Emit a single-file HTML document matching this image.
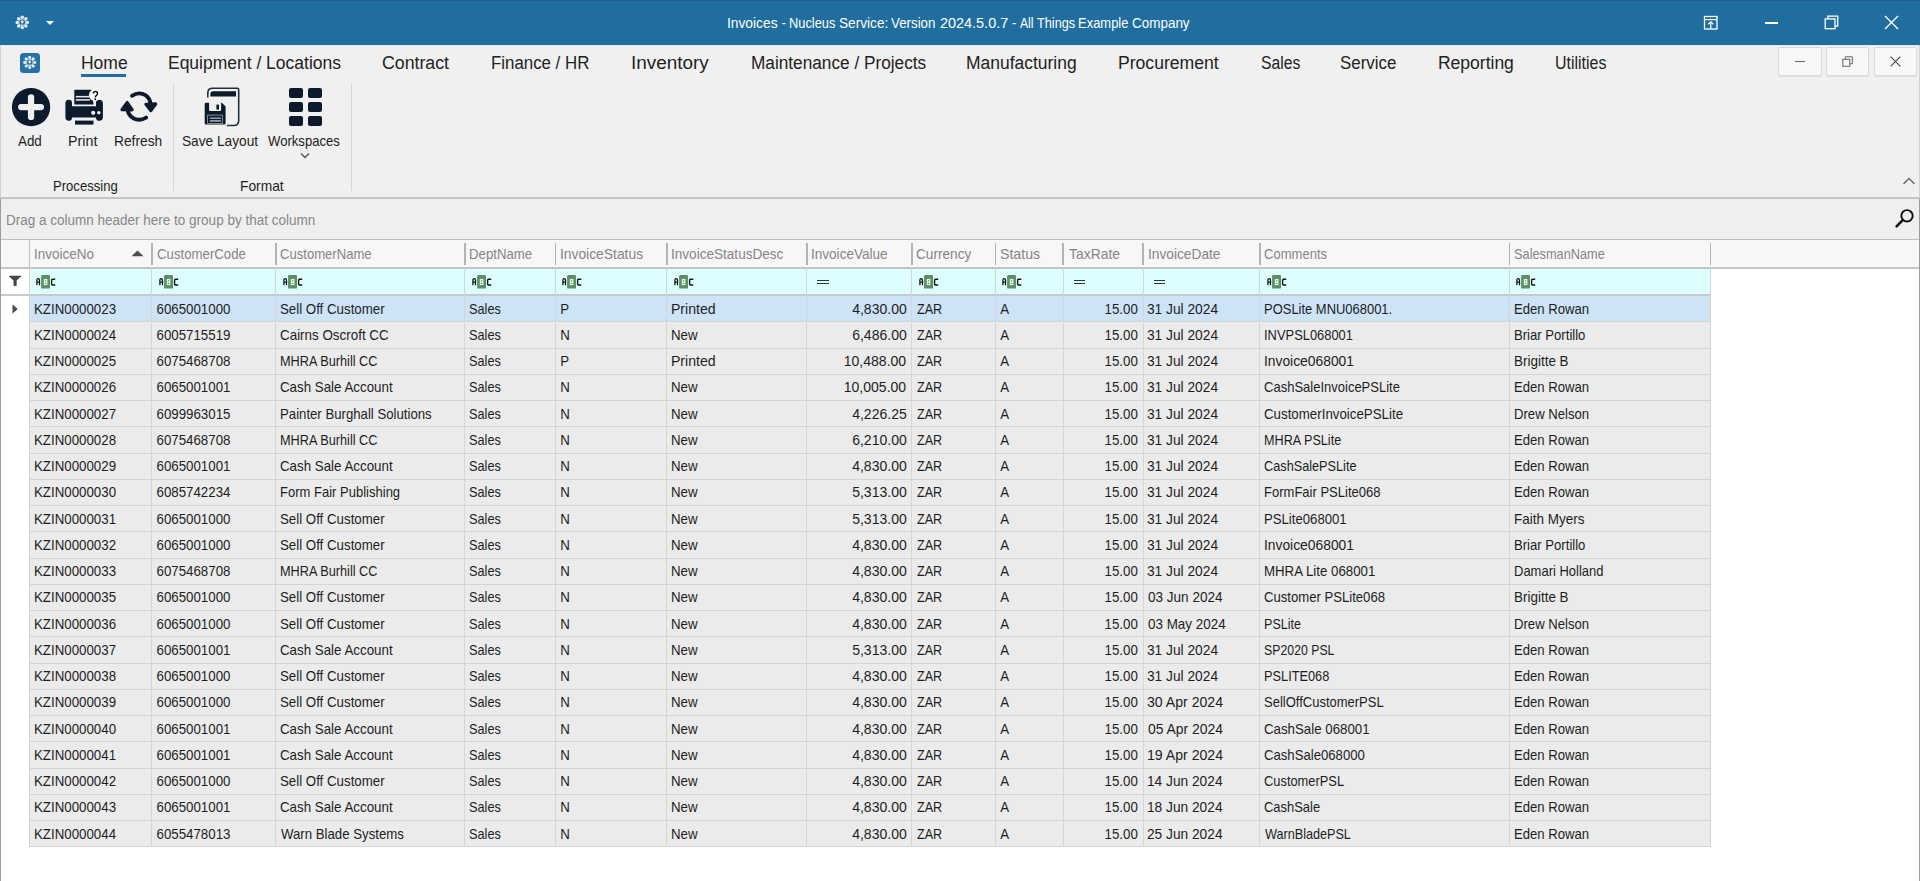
<!DOCTYPE html><html><head><meta charset="utf-8"><style>
html,body{margin:0;padding:0}
body{width:1920px;height:881px;position:relative;overflow:hidden;background:#fff;font-family:"Liberation Sans",sans-serif;}
.a{position:absolute;white-space:pre;line-height:normal}
.g{font-size:13.3px;color:#1e1e1e;transform:scaleY(1.11);transform-origin:0 2.9px}
.s11{transform:scaleY(1.11);transform-origin:0 2.9px}
.b{position:absolute}
svg{position:absolute;overflow:visible}
</style></head><body>

<div class="b" style="left:0;top:0;width:1920px;height:45px;background:#206e9f"></div>
<div class="b" style="left:0;top:0;width:1920px;height:1px;background:#1d5f88"></div>
<svg style="left:12px;top:12px" width="20" height="20" viewBox="-10.25 -10.40 20 20"><g opacity="0.88"><circle cx="5.10" cy="0.00" r="1.75" fill="#ffffff"/><circle cx="3.61" cy="3.61" r="1.75" fill="#ffffff"/><circle cx="0.00" cy="5.10" r="1.75" fill="#ffffff"/><circle cx="-3.61" cy="3.61" r="1.75" fill="#ffffff"/><circle cx="-5.10" cy="0.00" r="1.75" fill="#ffffff"/><circle cx="-3.61" cy="-3.61" r="1.75" fill="#ffffff"/><circle cx="-0.00" cy="-5.10" r="1.75" fill="#ffffff"/><circle cx="3.61" cy="-3.61" r="1.75" fill="#ffffff"/><circle cx="0" cy="0" r="3.47" fill="none" stroke="#ffffff" stroke-width="1.0" opacity="0.75"/><ellipse cx="0" cy="-0.6" rx="1.33" ry="1.63" fill="#ffffff"/><path d="M-2.29 3.16 Q0 0.76 2.29 3.16" fill="none" stroke="#ffffff" stroke-width="0.9" opacity="0.6"/></g></svg>
<svg style="left:45px;top:20px" width="10" height="6" viewBox="0 0 10 6"><path d="M1 1 L9 1 L5 5 Z" fill="#fff"/></svg>
<div class="a" style="left:726.50px;top:14.5px;font-size:13.4px;color:#fff;transform:scale(1.029,1.14);transform-origin:1px 2.9px">Invoices</div>
<div class="a" style="left:781.50px;top:14.5px;font-size:13.4px;color:#fff;transform:scale(1.000,1.14);transform-origin:1px 2.9px">-</div>
<div class="a" style="left:789.00px;top:14.5px;font-size:13.4px;color:#fff;transform:scale(0.957,1.14);transform-origin:1px 2.9px">Nucleus</div>
<div class="a" style="left:839.00px;top:14.5px;font-size:13.4px;color:#fff;transform:scale(1.020,1.14);transform-origin:1px 2.9px">Service:</div>
<div class="a" style="left:891.25px;top:14.5px;font-size:13.4px;color:#fff;transform:scale(0.994,1.14);transform-origin:0px 2.9px">Version</div>
<div class="a" style="left:939.50px;top:14.5px;font-size:13.4px;color:#fff;transform:scale(1.079,1.14);transform-origin:1px 2.9px">2024.5.0.7</div>
<div class="a" style="left:1012.00px;top:14.5px;font-size:13.4px;color:#fff;transform:scale(1.000,1.14);transform-origin:1px 2.9px">-</div>
<div class="a" style="left:1020.00px;top:14.5px;font-size:13.4px;color:#fff;transform:scale(0.907,1.14);transform-origin:0px 2.9px">All</div>
<div class="a" style="left:1036.90px;top:14.5px;font-size:13.4px;color:#fff;transform:scale(0.950,1.14);transform-origin:0px 2.9px">Things</div>
<div class="a" style="left:1078.00px;top:14.5px;font-size:13.4px;color:#fff;transform:scale(0.967,1.14);transform-origin:1px 2.9px">Example</div>
<div class="a" style="left:1131.50px;top:14.5px;font-size:13.4px;color:#fff;transform:scale(1.005,1.14);transform-origin:1px 2.9px">Company</div>
<svg style="left:1703px;top:15px" width="16" height="15" viewBox="0 0 16 15"><rect x="1.5" y="1.5" width="12.5" height="12.5" fill="none" stroke="#fff" stroke-width="1.3"/><line x1="1.5" y1="4.6" x2="14" y2="4.6" stroke="#fff" stroke-width="1.2"/><line x1="7.75" y1="7" x2="7.75" y2="14" stroke="#fff" stroke-width="1.2"/><path d="M5.2 9.3 L7.75 6.8 L10.3 9.3" fill="none" stroke="#fff" stroke-width="1.2"/></svg>
<div class="b" style="left:1765px;top:22px;width:13px;height:1.5px;background:#fff"></div>
<svg style="left:1824px;top:15px" width="15" height="15" viewBox="0 0 15 15"><rect x="1.2" y="3.9" width="9.8" height="9.8" fill="none" stroke="#fff" stroke-width="1.3"/><path d="M3.9 3.9 V1.2 H13.7 V11 H11" fill="none" stroke="#fff" stroke-width="1.3"/></svg>
<svg style="left:1884px;top:15px" width="15" height="15" viewBox="0 0 15 15"><path d="M1 1 L14 14 M14 1 L1 14" stroke="#fff" stroke-width="1.4"/></svg>
<div class="b" style="left:0;top:45px;width:1920px;height:152px;background:#f0f0f0"></div>
<div class="b" style="left:0;top:45px;width:1920px;height:1px;background:#e7e9eb"></div>
<div class="b" style="left:0;top:45px;width:1px;height:152px;background:#d4d4d4"></div>
<div class="b" style="left:0;top:197px;width:1px;height:684px;background:#9c9c9c"></div>
<div class="b" style="left:1919px;top:45px;width:1px;height:152px;background:#d4d4d4"></div>
<div class="b" style="left:1919px;top:197px;width:1px;height:684px;background:#9c9c9c"></div>
<div class="b" style="left:20.2px;top:52.6px;width:19.8px;height:20px;border-radius:3.5px;background:#2472a8"></div>
<svg style="left:19px;top:52px" width="20" height="20" viewBox="-10.70 -10.40 20 20"><g opacity="0.88"><circle cx="5.00" cy="0.00" r="1.55" fill="#ffffff"/><circle cx="3.54" cy="3.54" r="1.55" fill="#ffffff"/><circle cx="0.00" cy="5.00" r="1.55" fill="#ffffff"/><circle cx="-3.54" cy="3.54" r="1.55" fill="#ffffff"/><circle cx="-5.00" cy="0.00" r="1.55" fill="#ffffff"/><circle cx="-3.54" cy="-3.54" r="1.55" fill="#ffffff"/><circle cx="-0.00" cy="-5.00" r="1.55" fill="#ffffff"/><circle cx="3.54" cy="-3.54" r="1.55" fill="#ffffff"/><circle cx="0" cy="0" r="3.40" fill="none" stroke="#ffffff" stroke-width="1.0" opacity="0.75"/><ellipse cx="0" cy="-0.6" rx="1.30" ry="1.60" fill="#ffffff"/><path d="M-2.25 3.10 Q0 0.75 2.25 3.10" fill="none" stroke="#ffffff" stroke-width="0.9" opacity="0.6"/></g></svg>
<div class="a" style="left:80.5px;top:51.8px;font-size:17.2px;color:#222;transform:scale(1.017,1.07);transform-origin:1px 3.7px">Home</div>
<div class="a" style="left:168.4px;top:51.8px;font-size:17.2px;color:#222;transform:scale(1.017,1.07);transform-origin:1px 3.7px">Equipment / Locations</div>
<div class="a" style="left:381.5px;top:51.8px;font-size:17.2px;color:#222;transform:scale(1.032,1.07);transform-origin:1px 3.7px">Contract</div>
<div class="a" style="left:491.3px;top:51.8px;font-size:17.2px;color:#222;transform:scale(0.98,1.07);transform-origin:1px 3.7px">Finance / HR</div>
<div class="a" style="left:631.3px;top:51.8px;font-size:17.2px;color:#222;transform:scale(1.101,1.07);transform-origin:1px 3.7px">Inventory</div>
<div class="a" style="left:750.7px;top:51.8px;font-size:17.2px;color:#222;transform:scale(1.002,1.07);transform-origin:1px 3.7px">Maintenance / Projects</div>
<div class="a" style="left:966.3px;top:51.8px;font-size:17.2px;color:#222;transform:scale(1.016,1.07);transform-origin:1px 3.7px">Manufacturing</div>
<div class="a" style="left:1118px;top:51.8px;font-size:17.2px;color:#222;transform:scale(1.024,1.07);transform-origin:1px 3.7px">Procurement</div>
<div class="a" style="left:1260.7px;top:51.8px;font-size:17.2px;color:#222;transform:scale(0.91,1.07);transform-origin:1px 3.7px">Sales</div>
<div class="a" style="left:1340px;top:51.8px;font-size:17.2px;color:#222;transform:scale(0.982,1.07);transform-origin:1px 3.7px">Service</div>
<div class="a" style="left:1438px;top:51.8px;font-size:17.2px;color:#222;transform:scale(1.018,1.07);transform-origin:1px 3.7px">Reporting</div>
<div class="a" style="left:1555px;top:51.8px;font-size:17.2px;color:#222;transform:scale(0.926,1.07);transform-origin:1px 3.7px">Utilities</div>
<div class="b" style="left:81px;top:73.8px;width:45.3px;height:3.7px;background:#1f6fa3"></div>
<div class="b" style="left:1778.4px;top:47.4px;width:43.4px;height:28.4px;box-sizing:border-box;border:1px solid #dadada;border-radius:2px;background:#f8f8f8;box-shadow:0 0.5px 1px rgba(0,0,0,0.08)"></div>
<div class="b" style="left:1825.6px;top:47.4px;width:43.4px;height:28.4px;box-sizing:border-box;border:1px solid #dadada;border-radius:2px;background:#f8f8f8;box-shadow:0 0.5px 1px rgba(0,0,0,0.08)"></div>
<div class="b" style="left:1873.5px;top:47.4px;width:43.4px;height:28.4px;box-sizing:border-box;border:1px solid #dadada;border-radius:2px;background:#f8f8f8;box-shadow:0 0.5px 1px rgba(0,0,0,0.08)"></div>
<div class="b" style="left:1795px;top:61.2px;width:10.2px;height:1.3px;background:#666"></div>
<svg style="left:1842px;top:55.5px" width="12" height="12" viewBox="0 0 12 12"><rect x="0.8" y="3.3" width="7" height="7" fill="none" stroke="#666" stroke-width="1"/><path d="M3.3 3.3 V0.8 H10.3 V7.8 H7.8" fill="none" stroke="#666" stroke-width="1"/></svg>
<svg style="left:1889.5px;top:55.5px" width="11" height="11" viewBox="0 0 11 11"><path d="M0.6 0.6 L10.4 10.4 M10.4 0.6 L0.6 10.4" stroke="#4a4a4a" stroke-width="1.1"/></svg>
<svg style="left:11px;top:87px" width="40" height="40" viewBox="0 0 40 40"><circle cx="20.05" cy="20.1" r="19.15" fill="#0c1a2b"/><path d="M20.05 10.3 V29.9 M10.2 20.1 H29.9" stroke="#f0f0f0" stroke-width="6.3" stroke-linecap="round"/></svg>
<svg style="left:60px;top:85px" width="50" height="45" viewBox="0 0 50 45">
<path d="M14.3 4.85 H31.5 L33.5 19.4 H14.3 Z" fill="#0c1a2b"/>
<rect x="15.8" y="10.9" width="13.5" height="1.6" fill="#e2e4e6"/>
<rect x="15.8" y="14.1" width="14" height="1.6" fill="#e2e4e6"/>
<path d="M5.4 18.3 Q5.4 14.8 8.7 14.8 Q12 14.8 12 18 V21.2 H36 V18 Q36 14.8 39.4 14.8 Q42.9 14.8 42.9 18.3 V32.3 Q42.9 35.75 39.4 35.75 Q36 35.75 36 32.4 H12 Q12 35.75 8.7 35.75 Q5.4 35.75 5.4 32.3 Z" fill="#0c1a2b"/>
<circle cx="33.2" cy="27.8" r="2.1" fill="#f0f0f0"/><circle cx="38.8" cy="27.8" r="1.7" fill="#f0f0f0"/>
<rect x="15" y="35.6" width="18.5" height="4" fill="#0c1a2b"/>
<circle cx="34.7" cy="10.2" r="5.8" fill="#fff"/>
<path d="M33.3 8.6 Q33.3 6.6 35.4 6.6 Q37.5 6.6 37.5 8.6 Q37.5 9.9 36.2 10.6 Q35.4 11.1 35.4 12.6" fill="none" stroke="#111" stroke-width="1.5"/><circle cx="35.3" cy="14.3" r="0.95" fill="#111"/>
</svg>
<svg style="left:115px;top:85px" width="50" height="45" viewBox="0 0 50 45">
<path d="M16.9 10.8 Q24 6.2 30.5 10.2 Q35 13.2 35.7 19.5" fill="none" stroke="#0c1a2b" stroke-width="3.8" stroke-linecap="round"/>
<path d="M31.0 19.3 L40.6 19.0 L35.8 25.6 Z" fill="#0c1a2b" stroke="#0c1a2b" stroke-width="3.3" stroke-linejoin="round"/>
<path d="M31.2 32.6 Q24.5 36.5 18.2 33.2 Q13 30 12.5 24" fill="none" stroke="#0c1a2b" stroke-width="3.8" stroke-linecap="round"/>
<path d="M7.0 24.6 L17.0 24.8 L12.1 17.6 Z" fill="#0c1a2b" stroke="#0c1a2b" stroke-width="3.3" stroke-linejoin="round"/>
</svg>
<svg style="left:200px;top:84px" width="45" height="46" viewBox="0 0 45 46">
<path d="M7.8 13.4 V9 Q7.8 4.2 12.6 4.2 H37.4 Q38.7 4.2 38.7 5.5 V36.5 Q38.7 41.5 33.7 41.5 H26.8" fill="none" stroke="#23313f" stroke-width="1.6"/>
<path d="M10.4 10 Q10.4 7.3 13 7.3 H36 V12.5 H10.4 Z" fill="#0c1a2b"/>
<path d="M4.7 20 Q4.7 18.8 5.9 18.8 H9.1 V26 Q9.1 27.1 10.2 27.1 H20 Q21.1 27.1 21.1 26 V18.8 H21.8 L25.6 22.6 V39.2 Q25.6 40.4 24.4 40.4 H5.9 Q4.7 40.4 4.7 39.2 Z" fill="#0c1a2b"/>
<rect x="16.4" y="20.6" width="2.6" height="5" fill="#0c1a2b"/>
<rect x="7.6" y="31.1" width="15" height="8.4" fill="none" stroke="#8e98a2" stroke-width="0.9"/>
<rect x="9.9" y="33.4" width="11" height="1.6" fill="#8e98a2"/>
<rect x="9.9" y="36" width="11" height="1.8" fill="#8e98a2"/>
</svg>
<div class="b" style="left:288.7px;top:87.8px;width:14.70px;height:10.40px;background:#0c1a2b;border-radius:2px"></div>
<div class="b" style="left:288.7px;top:101.9px;width:14.70px;height:10.40px;background:#0c1a2b;border-radius:2px"></div>
<div class="b" style="left:288.7px;top:116.1px;width:14.70px;height:10.40px;background:#0c1a2b;border-radius:2px"></div>
<div class="b" style="left:307.5px;top:87.8px;width:14.70px;height:10.40px;background:#0c1a2b;border-radius:2px"></div>
<div class="b" style="left:307.5px;top:101.9px;width:14.70px;height:10.40px;background:#0c1a2b;border-radius:2px"></div>
<div class="b" style="left:307.5px;top:116.1px;width:14.70px;height:10.40px;background:#0c1a2b;border-radius:2px"></div>
<div class="a" style="left:18.40px;top:133px;font-size:13.3px;color:#1e1e1e;transform:scale(1.004,1.11);transform-origin:0px 2.9px">Add</div>
<div class="a" style="left:68.40px;top:133px;font-size:13.3px;color:#1e1e1e;transform:scale(1.077,1.11);transform-origin:1px 2.9px">Print</div>
<div class="a" style="left:113.80px;top:133px;font-size:13.3px;color:#1e1e1e;transform:scale(1.036,1.11);transform-origin:1px 2.9px">Refresh</div>
<div class="a" style="left:182.30px;top:133px;font-size:13.3px;color:#1e1e1e;transform:scale(1.030,1.11);transform-origin:1px 2.9px">Save Layout</div>
<div class="a" style="left:268.30px;top:133px;font-size:13.3px;color:#1e1e1e;transform:scale(0.986,1.11);transform-origin:0px 2.9px">Workspaces</div>
<div class="a" style="left:52.50px;top:177.7px;font-size:13.3px;color:#1e1e1e;transform:scale(0.983,1.11);transform-origin:1px 2.9px">Processing</div>
<div class="a" style="left:239.80px;top:177.7px;font-size:13.3px;color:#1e1e1e;transform:scale(1.037,1.11);transform-origin:1px 2.9px">Format</div>
<svg style="left:300px;top:152px" width="10" height="8" viewBox="0 0 10 8"><path d="M1 1.5 L5 5.5 L9 1.5" fill="none" stroke="#555" stroke-width="1.4"/></svg>
<div class="b" style="left:173px;top:83px;width:1px;height:108px;background:#d6d6d6"></div>
<div class="b" style="left:351px;top:83px;width:1.2px;height:108px;background:#d6d6d6"></div>
<svg style="left:1902px;top:176px" width="14" height="10" viewBox="0 0 14 10"><path d="M1.5 8 L7 2.5 L12.5 8" fill="none" stroke="#666" stroke-width="1.3"/></svg>
<div class="b" style="left:0;top:197px;width:1920px;height:2px;background:#c3c3c3"></div>
<div class="b" style="left:1px;top:199px;width:1918px;height:40px;background:#efefef"></div>
<div class="a s11" style="left:6px;top:212px;font-size:13.5px;color:#878787">Drag a column header here to group by that column</div>
<svg style="left:1894px;top:207px" width="22" height="22" viewBox="0 0 22 22"><circle cx="13" cy="8.8" r="5.7" fill="none" stroke="#111" stroke-width="1.9"/><path d="M8.9 12.9 L2.6 19.3" stroke="#111" stroke-width="2.6" stroke-linecap="round"/></svg>
<div class="b" style="left:1px;top:239px;width:1918px;height:29px;background:#f7f7f7"></div>
<div class="b" style="left:1px;top:239px;width:1918px;height:1.2px;background:#bdbdbd"></div>
<div class="b" style="left:1px;top:267px;width:1918px;height:1.5px;background:#c4c4c4"></div>
<div class="b" style="left:29px;top:240px;width:1px;height:27px;background:#bdbdbd"></div>
<div class="a" style="left:33.75px;top:245.5px;font-size:13.3px;color:#858585;transform:scale(1.017,1.11);transform-origin:1px 2.9px">InvoiceNo</div>
<div class="a" style="left:156.50px;top:245.5px;font-size:13.3px;color:#858585;transform:scale(0.994,1.11);transform-origin:1px 2.9px">CustomerCode</div>
<div class="a" style="left:279.80px;top:245.5px;font-size:13.3px;color:#858585;transform:scale(0.984,1.11);transform-origin:1px 2.9px">CustomerName</div>
<div class="a" style="left:468.70px;top:245.5px;font-size:13.3px;color:#858585;transform:scale(0.994,1.11);transform-origin:1px 2.9px">DeptName</div>
<div class="a" style="left:559.80px;top:245.5px;font-size:13.3px;color:#858585;transform:scale(1.041,1.11);transform-origin:1px 2.9px">InvoiceStatus</div>
<div class="a" style="left:671.00px;top:245.5px;font-size:13.3px;color:#858585;transform:scale(1.021,1.11);transform-origin:1px 2.9px">InvoiceStatusDesc</div>
<div class="a" style="left:811.00px;top:245.5px;font-size:13.3px;color:#858585;transform:scale(1.020,1.11);transform-origin:1px 2.9px">InvoiceValue</div>
<div class="a" style="left:916.00px;top:245.5px;font-size:13.3px;color:#858585;transform:scale(1.025,1.11);transform-origin:1px 2.9px">Currency</div>
<div class="a" style="left:999.80px;top:245.5px;font-size:13.3px;color:#858585;transform:scale(1.067,1.11);transform-origin:1px 2.9px">Status</div>
<div class="a" style="left:1068.75px;top:245.5px;font-size:13.3px;color:#858585;transform:scale(1.047,1.11);transform-origin:0px 2.9px">TaxRate</div>
<div class="a" style="left:1147.75px;top:245.5px;font-size:13.3px;color:#858585;transform:scale(1.033,1.11);transform-origin:1px 2.9px">InvoiceDate</div>
<div class="a" style="left:1263.50px;top:245.5px;font-size:13.3px;color:#858585;transform:scale(0.980,1.11);transform-origin:1px 2.9px">Comments</div>
<div class="a" style="left:1513.50px;top:245.5px;font-size:13.3px;color:#858585;transform:scale(0.960,1.11);transform-origin:1px 2.9px">SalesmanName</div>
<div class="b" style="left:150.9px;top:242.6px;width:1.7px;height:22.2px;background:#b4b4b4"></div>
<div class="b" style="left:274.9px;top:242.6px;width:1.7px;height:22.2px;background:#b4b4b4"></div>
<div class="b" style="left:463.9px;top:242.6px;width:1.7px;height:22.2px;background:#b4b4b4"></div>
<div class="b" style="left:554.6999999999999px;top:242.6px;width:1.7px;height:22.2px;background:#b4b4b4"></div>
<div class="b" style="left:666.1px;top:242.6px;width:1.7px;height:22.2px;background:#b4b4b4"></div>
<div class="b" style="left:806.1px;top:242.6px;width:1.7px;height:22.2px;background:#b4b4b4"></div>
<div class="b" style="left:911.1px;top:242.6px;width:1.7px;height:22.2px;background:#b4b4b4"></div>
<div class="b" style="left:994.6999999999999px;top:242.6px;width:1.7px;height:22.2px;background:#b4b4b4"></div>
<div class="b" style="left:1062.4px;top:242.6px;width:1.7px;height:22.2px;background:#b4b4b4"></div>
<div class="b" style="left:1142.4px;top:242.6px;width:1.7px;height:22.2px;background:#b4b4b4"></div>
<div class="b" style="left:1258.9px;top:242.6px;width:1.7px;height:22.2px;background:#b4b4b4"></div>
<div class="b" style="left:1508.7px;top:242.6px;width:1.7px;height:22.2px;background:#b4b4b4"></div>
<div class="b" style="left:1709.7px;top:242.6px;width:1.7px;height:22.2px;background:#b4b4b4"></div>
<svg style="left:131px;top:250px" width="13" height="7" viewBox="0 0 13 7"><path d="M0.5 6.2 L6.5 0.4 L12.5 6.2 Z" fill="#4d4d4d"/></svg>
<div class="b" style="left:1px;top:268.5px;width:28px;height:26px;background:#fff"></div>
<div class="b" style="left:30px;top:268.5px;width:1680.3px;height:26px;background:#dcfefe"></div>
<div class="b" style="left:1710.8px;top:268.5px;width:208.20000000000005px;height:613px;background:#fff"></div>
<svg style="left:8px;top:275px" width="15" height="12" viewBox="0 0 15 12"><path d="M1 1 H13.2 L8.4 5.6 V10.8 H5.8 V5.6 Z" fill="#454545" stroke="#454545" stroke-width="0.5" stroke-linejoin="round"/></svg>
<svg style="left:36px;top:274px" width="21" height="16" viewBox="0 0 21 16"><path d="M0.9 11.2 V5.9 Q0.9 4.6 2.2 4.6 Q3.5 4.6 3.5 5.9 V11.2 M0.9 8.1 H3.5" fill="none" stroke="#111" stroke-width="1.25"/><rect x="5.1" y="1" width="8.9" height="13.6" rx="1.2" fill="#5a9064"/><rect x="7.8" y="4.9" width="3.6" height="6.2" fill="#e4f6e8"/><circle cx="9.6" cy="6.6" r="0.7" fill="#5a9064"/><circle cx="9.6" cy="9.4" r="0.7" fill="#5a9064"/><path d="M19.2 5.2 H16.5 Q15.6 5.2 15.6 6.2 V10 Q15.6 11 16.5 11 H19.2" fill="none" stroke="#111" stroke-width="1.35"/></svg>
<svg style="left:158.5px;top:274px" width="21" height="16" viewBox="0 0 21 16"><path d="M0.9 11.2 V5.9 Q0.9 4.6 2.2 4.6 Q3.5 4.6 3.5 5.9 V11.2 M0.9 8.1 H3.5" fill="none" stroke="#111" stroke-width="1.25"/><rect x="5.1" y="1" width="8.9" height="13.6" rx="1.2" fill="#5a9064"/><rect x="7.8" y="4.9" width="3.6" height="6.2" fill="#e4f6e8"/><circle cx="9.6" cy="6.6" r="0.7" fill="#5a9064"/><circle cx="9.6" cy="9.4" r="0.7" fill="#5a9064"/><path d="M19.2 5.2 H16.5 Q15.6 5.2 15.6 6.2 V10 Q15.6 11 16.5 11 H19.2" fill="none" stroke="#111" stroke-width="1.35"/></svg>
<svg style="left:282.5px;top:274px" width="21" height="16" viewBox="0 0 21 16"><path d="M0.9 11.2 V5.9 Q0.9 4.6 2.2 4.6 Q3.5 4.6 3.5 5.9 V11.2 M0.9 8.1 H3.5" fill="none" stroke="#111" stroke-width="1.25"/><rect x="5.1" y="1" width="8.9" height="13.6" rx="1.2" fill="#5a9064"/><rect x="7.8" y="4.9" width="3.6" height="6.2" fill="#e4f6e8"/><circle cx="9.6" cy="6.6" r="0.7" fill="#5a9064"/><circle cx="9.6" cy="9.4" r="0.7" fill="#5a9064"/><path d="M19.2 5.2 H16.5 Q15.6 5.2 15.6 6.2 V10 Q15.6 11 16.5 11 H19.2" fill="none" stroke="#111" stroke-width="1.35"/></svg>
<svg style="left:471.5px;top:274px" width="21" height="16" viewBox="0 0 21 16"><path d="M0.9 11.2 V5.9 Q0.9 4.6 2.2 4.6 Q3.5 4.6 3.5 5.9 V11.2 M0.9 8.1 H3.5" fill="none" stroke="#111" stroke-width="1.25"/><rect x="5.1" y="1" width="8.9" height="13.6" rx="1.2" fill="#5a9064"/><rect x="7.8" y="4.9" width="3.6" height="6.2" fill="#e4f6e8"/><circle cx="9.6" cy="6.6" r="0.7" fill="#5a9064"/><circle cx="9.6" cy="9.4" r="0.7" fill="#5a9064"/><path d="M19.2 5.2 H16.5 Q15.6 5.2 15.6 6.2 V10 Q15.6 11 16.5 11 H19.2" fill="none" stroke="#111" stroke-width="1.35"/></svg>
<svg style="left:562.3px;top:274px" width="21" height="16" viewBox="0 0 21 16"><path d="M0.9 11.2 V5.9 Q0.9 4.6 2.2 4.6 Q3.5 4.6 3.5 5.9 V11.2 M0.9 8.1 H3.5" fill="none" stroke="#111" stroke-width="1.25"/><rect x="5.1" y="1" width="8.9" height="13.6" rx="1.2" fill="#5a9064"/><rect x="7.8" y="4.9" width="3.6" height="6.2" fill="#e4f6e8"/><circle cx="9.6" cy="6.6" r="0.7" fill="#5a9064"/><circle cx="9.6" cy="9.4" r="0.7" fill="#5a9064"/><path d="M19.2 5.2 H16.5 Q15.6 5.2 15.6 6.2 V10 Q15.6 11 16.5 11 H19.2" fill="none" stroke="#111" stroke-width="1.35"/></svg>
<svg style="left:673.7px;top:274px" width="21" height="16" viewBox="0 0 21 16"><path d="M0.9 11.2 V5.9 Q0.9 4.6 2.2 4.6 Q3.5 4.6 3.5 5.9 V11.2 M0.9 8.1 H3.5" fill="none" stroke="#111" stroke-width="1.25"/><rect x="5.1" y="1" width="8.9" height="13.6" rx="1.2" fill="#5a9064"/><rect x="7.8" y="4.9" width="3.6" height="6.2" fill="#e4f6e8"/><circle cx="9.6" cy="6.6" r="0.7" fill="#5a9064"/><circle cx="9.6" cy="9.4" r="0.7" fill="#5a9064"/><path d="M19.2 5.2 H16.5 Q15.6 5.2 15.6 6.2 V10 Q15.6 11 16.5 11 H19.2" fill="none" stroke="#111" stroke-width="1.35"/></svg>
<div class="b" style="left:817.3000000000001px;top:279.6px;width:11.3px;height:1.6px;background:#333"></div>
<div class="b" style="left:817.3000000000001px;top:282.9px;width:11.3px;height:1.6px;background:#333"></div>
<svg style="left:918.7px;top:274px" width="21" height="16" viewBox="0 0 21 16"><path d="M0.9 11.2 V5.9 Q0.9 4.6 2.2 4.6 Q3.5 4.6 3.5 5.9 V11.2 M0.9 8.1 H3.5" fill="none" stroke="#111" stroke-width="1.25"/><rect x="5.1" y="1" width="8.9" height="13.6" rx="1.2" fill="#5a9064"/><rect x="7.8" y="4.9" width="3.6" height="6.2" fill="#e4f6e8"/><circle cx="9.6" cy="6.6" r="0.7" fill="#5a9064"/><circle cx="9.6" cy="9.4" r="0.7" fill="#5a9064"/><path d="M19.2 5.2 H16.5 Q15.6 5.2 15.6 6.2 V10 Q15.6 11 16.5 11 H19.2" fill="none" stroke="#111" stroke-width="1.35"/></svg>
<svg style="left:1002.3px;top:274px" width="21" height="16" viewBox="0 0 21 16"><path d="M0.9 11.2 V5.9 Q0.9 4.6 2.2 4.6 Q3.5 4.6 3.5 5.9 V11.2 M0.9 8.1 H3.5" fill="none" stroke="#111" stroke-width="1.25"/><rect x="5.1" y="1" width="8.9" height="13.6" rx="1.2" fill="#5a9064"/><rect x="7.8" y="4.9" width="3.6" height="6.2" fill="#e4f6e8"/><circle cx="9.6" cy="6.6" r="0.7" fill="#5a9064"/><circle cx="9.6" cy="9.4" r="0.7" fill="#5a9064"/><path d="M19.2 5.2 H16.5 Q15.6 5.2 15.6 6.2 V10 Q15.6 11 16.5 11 H19.2" fill="none" stroke="#111" stroke-width="1.35"/></svg>
<div class="b" style="left:1073.6px;top:279.6px;width:11.3px;height:1.6px;background:#333"></div>
<div class="b" style="left:1073.6px;top:282.9px;width:11.3px;height:1.6px;background:#333"></div>
<div class="b" style="left:1153.6px;top:279.6px;width:11.3px;height:1.6px;background:#333"></div>
<div class="b" style="left:1153.6px;top:282.9px;width:11.3px;height:1.6px;background:#333"></div>
<svg style="left:1266.5px;top:274px" width="21" height="16" viewBox="0 0 21 16"><path d="M0.9 11.2 V5.9 Q0.9 4.6 2.2 4.6 Q3.5 4.6 3.5 5.9 V11.2 M0.9 8.1 H3.5" fill="none" stroke="#111" stroke-width="1.25"/><rect x="5.1" y="1" width="8.9" height="13.6" rx="1.2" fill="#5a9064"/><rect x="7.8" y="4.9" width="3.6" height="6.2" fill="#e4f6e8"/><circle cx="9.6" cy="6.6" r="0.7" fill="#5a9064"/><circle cx="9.6" cy="9.4" r="0.7" fill="#5a9064"/><path d="M19.2 5.2 H16.5 Q15.6 5.2 15.6 6.2 V10 Q15.6 11 16.5 11 H19.2" fill="none" stroke="#111" stroke-width="1.35"/></svg>
<svg style="left:1516.3px;top:274px" width="21" height="16" viewBox="0 0 21 16"><path d="M0.9 11.2 V5.9 Q0.9 4.6 2.2 4.6 Q3.5 4.6 3.5 5.9 V11.2 M0.9 8.1 H3.5" fill="none" stroke="#111" stroke-width="1.25"/><rect x="5.1" y="1" width="8.9" height="13.6" rx="1.2" fill="#5a9064"/><rect x="7.8" y="4.9" width="3.6" height="6.2" fill="#e4f6e8"/><circle cx="9.6" cy="6.6" r="0.7" fill="#5a9064"/><circle cx="9.6" cy="9.4" r="0.7" fill="#5a9064"/><path d="M19.2 5.2 H16.5 Q15.6 5.2 15.6 6.2 V10 Q15.6 11 16.5 11 H19.2" fill="none" stroke="#111" stroke-width="1.35"/></svg>
<div class="b" style="left:30px;top:295.0px;width:1680.3px;height:26.25px;background:#cde3f6"></div>
<div class="b" style="left:30px;top:321.25px;width:1680.3px;height:26.25px;background:#ebebeb"></div>
<div class="b" style="left:30px;top:347.5px;width:1680.3px;height:26.25px;background:#ebebeb"></div>
<div class="b" style="left:30px;top:373.75px;width:1680.3px;height:26.25px;background:#ebebeb"></div>
<div class="b" style="left:30px;top:400.0px;width:1680.3px;height:26.25px;background:#ebebeb"></div>
<div class="b" style="left:30px;top:426.25px;width:1680.3px;height:26.25px;background:#ebebeb"></div>
<div class="b" style="left:30px;top:452.5px;width:1680.3px;height:26.25px;background:#ebebeb"></div>
<div class="b" style="left:30px;top:478.75px;width:1680.3px;height:26.25px;background:#ebebeb"></div>
<div class="b" style="left:30px;top:505.0px;width:1680.3px;height:26.25px;background:#ebebeb"></div>
<div class="b" style="left:30px;top:531.25px;width:1680.3px;height:26.25px;background:#ebebeb"></div>
<div class="b" style="left:30px;top:557.5px;width:1680.3px;height:26.25px;background:#ebebeb"></div>
<div class="b" style="left:30px;top:583.75px;width:1680.3px;height:26.25px;background:#ebebeb"></div>
<div class="b" style="left:30px;top:610.0px;width:1680.3px;height:26.25px;background:#ebebeb"></div>
<div class="b" style="left:30px;top:636.25px;width:1680.3px;height:26.25px;background:#ebebeb"></div>
<div class="b" style="left:30px;top:662.5px;width:1680.3px;height:26.25px;background:#ebebeb"></div>
<div class="b" style="left:30px;top:688.75px;width:1680.3px;height:26.25px;background:#ebebeb"></div>
<div class="b" style="left:30px;top:715.0px;width:1680.3px;height:26.25px;background:#ebebeb"></div>
<div class="b" style="left:30px;top:741.25px;width:1680.3px;height:26.25px;background:#ebebeb"></div>
<div class="b" style="left:30px;top:767.5px;width:1680.3px;height:26.25px;background:#ebebeb"></div>
<div class="b" style="left:30px;top:793.75px;width:1680.3px;height:26.25px;background:#ebebeb"></div>
<div class="b" style="left:30px;top:820.0px;width:1680.3px;height:26.25px;background:#ebebeb"></div>
<div class="b" style="left:29px;top:321.25px;width:1681.8px;height:1px;background:#d5d5d5"></div>
<div class="b" style="left:29px;top:347.5px;width:1681.8px;height:1px;background:#d5d5d5"></div>
<div class="b" style="left:29px;top:373.75px;width:1681.8px;height:1px;background:#d5d5d5"></div>
<div class="b" style="left:29px;top:400.0px;width:1681.8px;height:1px;background:#d5d5d5"></div>
<div class="b" style="left:29px;top:426.25px;width:1681.8px;height:1px;background:#d5d5d5"></div>
<div class="b" style="left:29px;top:452.5px;width:1681.8px;height:1px;background:#d5d5d5"></div>
<div class="b" style="left:29px;top:478.75px;width:1681.8px;height:1px;background:#d5d5d5"></div>
<div class="b" style="left:29px;top:505.0px;width:1681.8px;height:1px;background:#d5d5d5"></div>
<div class="b" style="left:29px;top:531.25px;width:1681.8px;height:1px;background:#d5d5d5"></div>
<div class="b" style="left:29px;top:557.5px;width:1681.8px;height:1px;background:#d5d5d5"></div>
<div class="b" style="left:29px;top:583.75px;width:1681.8px;height:1px;background:#d5d5d5"></div>
<div class="b" style="left:29px;top:610.0px;width:1681.8px;height:1px;background:#d5d5d5"></div>
<div class="b" style="left:29px;top:636.25px;width:1681.8px;height:1px;background:#d5d5d5"></div>
<div class="b" style="left:29px;top:662.5px;width:1681.8px;height:1px;background:#d5d5d5"></div>
<div class="b" style="left:29px;top:688.75px;width:1681.8px;height:1px;background:#d5d5d5"></div>
<div class="b" style="left:29px;top:715.0px;width:1681.8px;height:1px;background:#d5d5d5"></div>
<div class="b" style="left:29px;top:741.25px;width:1681.8px;height:1px;background:#d5d5d5"></div>
<div class="b" style="left:29px;top:767.5px;width:1681.8px;height:1px;background:#d5d5d5"></div>
<div class="b" style="left:29px;top:793.75px;width:1681.8px;height:1px;background:#d5d5d5"></div>
<div class="b" style="left:29px;top:820.0px;width:1681.8px;height:1px;background:#d5d5d5"></div>
<div class="b" style="left:29px;top:846.25px;width:1681.8px;height:1px;background:#d5d5d5"></div>
<div class="b" style="left:1px;top:294px;width:1709.8px;height:2px;background:#c9c9c9"></div>
<div class="b" style="left:28.5px;top:268px;width:1px;height:578.25px;background:#d5d5d5"></div>
<div class="b" style="left:151.0px;top:268px;width:1px;height:578.25px;background:#d5d5d5"></div>
<div class="b" style="left:275.0px;top:268px;width:1px;height:578.25px;background:#d5d5d5"></div>
<div class="b" style="left:464.0px;top:268px;width:1px;height:578.25px;background:#d5d5d5"></div>
<div class="b" style="left:554.8px;top:268px;width:1px;height:578.25px;background:#d5d5d5"></div>
<div class="b" style="left:666.2px;top:268px;width:1px;height:578.25px;background:#d5d5d5"></div>
<div class="b" style="left:806.2px;top:268px;width:1px;height:578.25px;background:#d5d5d5"></div>
<div class="b" style="left:911.2px;top:268px;width:1px;height:578.25px;background:#d5d5d5"></div>
<div class="b" style="left:994.8px;top:268px;width:1px;height:578.25px;background:#d5d5d5"></div>
<div class="b" style="left:1062.5px;top:268px;width:1px;height:578.25px;background:#d5d5d5"></div>
<div class="b" style="left:1142.5px;top:268px;width:1px;height:578.25px;background:#d5d5d5"></div>
<div class="b" style="left:1259.0px;top:268px;width:1px;height:578.25px;background:#d5d5d5"></div>
<div class="b" style="left:1508.8px;top:268px;width:1px;height:578.25px;background:#d5d5d5"></div>
<div class="b" style="left:1709.8px;top:268px;width:1px;height:578.25px;background:#d5d5d5"></div>
<svg style="left:12px;top:303px" width="7" height="12" viewBox="0 0 7 12"><path d="M0.5 1.3 L5.7 6 L0.5 10.7 Z" fill="#4d4d4d"/></svg>
<div class="a g" style="left:34.0px;top:300.70px">KZIN0000023</div>
<div class="a g" style="left:156.5px;top:300.70px">6065001000</div>
<div class="a g" style="left:279.70px;top:300.70px;transform:scale(0.999,1.11);transform-origin:1px 2.9px">Sell Off Customer</div>
<div class="a g" style="left:468.70px;top:300.70px;transform:scale(0.956,1.11);transform-origin:1px 2.9px">Sales</div>
<div class="a g" style="left:560.3px;top:300.70px">P</div>
<div class="a g" style="left:670.90px;top:300.70px;transform:scale(1.062,1.11);transform-origin:1px 2.9px">Printed</div>
<div class="a g" style="right:1013.5px;top:300.70px;transform:scale(1.055,1.11);transform-origin:100% 2.9px">4,830.00</div>
<div class="a g" style="left:916.90px;top:300.70px;transform:scale(0.946,1.11);transform-origin:0px 2.9px">ZAR</div>
<div class="a g" style="left:1000.3px;top:300.70px">A</div>
<div class="a g" style="right:782.2px;top:300.70px;transform:scale(1.0,1.11);transform-origin:100% 2.9px">15.00</div>
<div class="a g" style="left:1147.20px;top:300.70px;transform:scale(1.034,1.11);transform-origin:1px 2.9px">31 Jul 2024</div>
<div class="a g" style="left:1263.70px;top:300.70px;transform:scale(0.974,1.11);transform-origin:1px 2.9px">POSLite MNU068001.</div>
<div class="a g" style="left:1513.50px;top:300.70px;transform:scale(0.987,1.11);transform-origin:1px 2.9px">Eden Rowan</div>
<div class="a g" style="left:34.0px;top:326.95px">KZIN0000024</div>
<div class="a g" style="left:156.5px;top:326.95px">6005715519</div>
<div class="a g" style="left:279.70px;top:326.95px;transform:scale(1.008,1.11);transform-origin:1px 2.9px">Cairns Oscroft CC</div>
<div class="a g" style="left:468.70px;top:326.95px;transform:scale(0.956,1.11);transform-origin:1px 2.9px">Sales</div>
<div class="a g" style="left:560.3px;top:326.95px">N</div>
<div class="a g" style="left:670.90px;top:326.95px;transform:scale(1.000,1.11);transform-origin:1px 2.9px">New</div>
<div class="a g" style="right:1013.5px;top:326.95px;transform:scale(1.055,1.11);transform-origin:100% 2.9px">6,486.00</div>
<div class="a g" style="left:916.90px;top:326.95px;transform:scale(0.946,1.11);transform-origin:0px 2.9px">ZAR</div>
<div class="a g" style="left:1000.3px;top:326.95px">A</div>
<div class="a g" style="right:782.2px;top:326.95px;transform:scale(1.0,1.11);transform-origin:100% 2.9px">15.00</div>
<div class="a g" style="left:1147.20px;top:326.95px;transform:scale(1.034,1.11);transform-origin:1px 2.9px">31 Jul 2024</div>
<div class="a g" style="left:1263.70px;top:326.95px;transform:scale(0.970,1.11);transform-origin:1px 2.9px">INVPSL068001</div>
<div class="a g" style="left:1513.50px;top:326.95px;transform:scale(0.986,1.11);transform-origin:1px 2.9px">Briar Portillo</div>
<div class="a g" style="left:34.0px;top:353.20px">KZIN0000025</div>
<div class="a g" style="left:156.5px;top:353.20px">6075468708</div>
<div class="a g" style="left:279.70px;top:353.20px;transform:scale(0.955,1.11);transform-origin:1px 2.9px">MHRA Burhill CC</div>
<div class="a g" style="left:468.70px;top:353.20px;transform:scale(0.956,1.11);transform-origin:1px 2.9px">Sales</div>
<div class="a g" style="left:560.3px;top:353.20px">P</div>
<div class="a g" style="left:670.90px;top:353.20px;transform:scale(1.062,1.11);transform-origin:1px 2.9px">Printed</div>
<div class="a g" style="right:1013.5px;top:353.20px;transform:scale(1.055,1.11);transform-origin:100% 2.9px">10,488.00</div>
<div class="a g" style="left:916.90px;top:353.20px;transform:scale(0.946,1.11);transform-origin:0px 2.9px">ZAR</div>
<div class="a g" style="left:1000.3px;top:353.20px">A</div>
<div class="a g" style="right:782.2px;top:353.20px;transform:scale(1.0,1.11);transform-origin:100% 2.9px">15.00</div>
<div class="a g" style="left:1147.20px;top:353.20px;transform:scale(1.034,1.11);transform-origin:1px 2.9px">31 Jul 2024</div>
<div class="a g" style="left:1263.70px;top:353.20px;transform:scale(1.041,1.11);transform-origin:1px 2.9px">Invoice068001</div>
<div class="a g" style="left:1513.50px;top:353.20px;transform:scale(1.012,1.11);transform-origin:1px 2.9px">Brigitte B</div>
<div class="a g" style="left:34.0px;top:379.45px">KZIN0000026</div>
<div class="a g" style="left:156.5px;top:379.45px">6065001001</div>
<div class="a g" style="left:279.70px;top:379.45px;transform:scale(1.002,1.11);transform-origin:1px 2.9px">Cash Sale Account</div>
<div class="a g" style="left:468.70px;top:379.45px;transform:scale(0.956,1.11);transform-origin:1px 2.9px">Sales</div>
<div class="a g" style="left:560.3px;top:379.45px">N</div>
<div class="a g" style="left:670.90px;top:379.45px;transform:scale(1.000,1.11);transform-origin:1px 2.9px">New</div>
<div class="a g" style="right:1013.5px;top:379.45px;transform:scale(1.055,1.11);transform-origin:100% 2.9px">10,005.00</div>
<div class="a g" style="left:916.90px;top:379.45px;transform:scale(0.946,1.11);transform-origin:0px 2.9px">ZAR</div>
<div class="a g" style="left:1000.3px;top:379.45px">A</div>
<div class="a g" style="right:782.2px;top:379.45px;transform:scale(1.0,1.11);transform-origin:100% 2.9px">15.00</div>
<div class="a g" style="left:1147.20px;top:379.45px;transform:scale(1.034,1.11);transform-origin:1px 2.9px">31 Jul 2024</div>
<div class="a g" style="left:1263.70px;top:379.45px;transform:scale(0.978,1.11);transform-origin:1px 2.9px">CashSaleInvoicePSLite</div>
<div class="a g" style="left:1513.50px;top:379.45px;transform:scale(0.987,1.11);transform-origin:1px 2.9px">Eden Rowan</div>
<div class="a g" style="left:34.0px;top:405.70px">KZIN0000027</div>
<div class="a g" style="left:156.5px;top:405.70px">6099963015</div>
<div class="a g" style="left:279.70px;top:405.70px;transform:scale(0.991,1.11);transform-origin:1px 2.9px">Painter Burghall Solutions</div>
<div class="a g" style="left:468.70px;top:405.70px;transform:scale(0.956,1.11);transform-origin:1px 2.9px">Sales</div>
<div class="a g" style="left:560.3px;top:405.70px">N</div>
<div class="a g" style="left:670.90px;top:405.70px;transform:scale(1.000,1.11);transform-origin:1px 2.9px">New</div>
<div class="a g" style="right:1013.5px;top:405.70px;transform:scale(1.055,1.11);transform-origin:100% 2.9px">4,226.25</div>
<div class="a g" style="left:916.90px;top:405.70px;transform:scale(0.946,1.11);transform-origin:0px 2.9px">ZAR</div>
<div class="a g" style="left:1000.3px;top:405.70px">A</div>
<div class="a g" style="right:782.2px;top:405.70px;transform:scale(1.0,1.11);transform-origin:100% 2.9px">15.00</div>
<div class="a g" style="left:1147.20px;top:405.70px;transform:scale(1.034,1.11);transform-origin:1px 2.9px">31 Jul 2024</div>
<div class="a g" style="left:1263.70px;top:405.70px;transform:scale(1.001,1.11);transform-origin:1px 2.9px">CustomerInvoicePSLite</div>
<div class="a g" style="left:1513.50px;top:405.70px;transform:scale(0.987,1.11);transform-origin:1px 2.9px">Drew Nelson</div>
<div class="a g" style="left:34.0px;top:431.95px">KZIN0000028</div>
<div class="a g" style="left:156.5px;top:431.95px">6075468708</div>
<div class="a g" style="left:279.70px;top:431.95px;transform:scale(0.955,1.11);transform-origin:1px 2.9px">MHRA Burhill CC</div>
<div class="a g" style="left:468.70px;top:431.95px;transform:scale(0.956,1.11);transform-origin:1px 2.9px">Sales</div>
<div class="a g" style="left:560.3px;top:431.95px">N</div>
<div class="a g" style="left:670.90px;top:431.95px;transform:scale(1.000,1.11);transform-origin:1px 2.9px">New</div>
<div class="a g" style="right:1013.5px;top:431.95px;transform:scale(1.055,1.11);transform-origin:100% 2.9px">6,210.00</div>
<div class="a g" style="left:916.90px;top:431.95px;transform:scale(0.946,1.11);transform-origin:0px 2.9px">ZAR</div>
<div class="a g" style="left:1000.3px;top:431.95px">A</div>
<div class="a g" style="right:782.2px;top:431.95px;transform:scale(1.0,1.11);transform-origin:100% 2.9px">15.00</div>
<div class="a g" style="left:1147.20px;top:431.95px;transform:scale(1.034,1.11);transform-origin:1px 2.9px">31 Jul 2024</div>
<div class="a g" style="left:1263.70px;top:431.95px;transform:scale(0.949,1.11);transform-origin:1px 2.9px">MHRA PSLite</div>
<div class="a g" style="left:1513.50px;top:431.95px;transform:scale(0.987,1.11);transform-origin:1px 2.9px">Eden Rowan</div>
<div class="a g" style="left:34.0px;top:458.20px">KZIN0000029</div>
<div class="a g" style="left:156.5px;top:458.20px">6065001001</div>
<div class="a g" style="left:279.70px;top:458.20px;transform:scale(1.002,1.11);transform-origin:1px 2.9px">Cash Sale Account</div>
<div class="a g" style="left:468.70px;top:458.20px;transform:scale(0.956,1.11);transform-origin:1px 2.9px">Sales</div>
<div class="a g" style="left:560.3px;top:458.20px">N</div>
<div class="a g" style="left:670.90px;top:458.20px;transform:scale(1.000,1.11);transform-origin:1px 2.9px">New</div>
<div class="a g" style="right:1013.5px;top:458.20px;transform:scale(1.055,1.11);transform-origin:100% 2.9px">4,830.00</div>
<div class="a g" style="left:916.90px;top:458.20px;transform:scale(0.946,1.11);transform-origin:0px 2.9px">ZAR</div>
<div class="a g" style="left:1000.3px;top:458.20px">A</div>
<div class="a g" style="right:782.2px;top:458.20px;transform:scale(1.0,1.11);transform-origin:100% 2.9px">15.00</div>
<div class="a g" style="left:1147.20px;top:458.20px;transform:scale(1.034,1.11);transform-origin:1px 2.9px">31 Jul 2024</div>
<div class="a g" style="left:1263.70px;top:458.20px;transform:scale(0.955,1.11);transform-origin:1px 2.9px">CashSalePSLite</div>
<div class="a g" style="left:1513.50px;top:458.20px;transform:scale(0.987,1.11);transform-origin:1px 2.9px">Eden Rowan</div>
<div class="a g" style="left:34.0px;top:484.45px">KZIN0000030</div>
<div class="a g" style="left:156.5px;top:484.45px">6085742234</div>
<div class="a g" style="left:279.70px;top:484.45px;transform:scale(0.979,1.11);transform-origin:1px 2.9px">Form Fair Publishing</div>
<div class="a g" style="left:468.70px;top:484.45px;transform:scale(0.956,1.11);transform-origin:1px 2.9px">Sales</div>
<div class="a g" style="left:560.3px;top:484.45px">N</div>
<div class="a g" style="left:670.90px;top:484.45px;transform:scale(1.000,1.11);transform-origin:1px 2.9px">New</div>
<div class="a g" style="right:1013.5px;top:484.45px;transform:scale(1.055,1.11);transform-origin:100% 2.9px">5,313.00</div>
<div class="a g" style="left:916.90px;top:484.45px;transform:scale(0.946,1.11);transform-origin:0px 2.9px">ZAR</div>
<div class="a g" style="left:1000.3px;top:484.45px">A</div>
<div class="a g" style="right:782.2px;top:484.45px;transform:scale(1.0,1.11);transform-origin:100% 2.9px">15.00</div>
<div class="a g" style="left:1147.20px;top:484.45px;transform:scale(1.034,1.11);transform-origin:1px 2.9px">31 Jul 2024</div>
<div class="a g" style="left:1263.70px;top:484.45px;transform:scale(0.979,1.11);transform-origin:1px 2.9px">FormFair PSLite068</div>
<div class="a g" style="left:1513.50px;top:484.45px;transform:scale(0.987,1.11);transform-origin:1px 2.9px">Eden Rowan</div>
<div class="a g" style="left:34.0px;top:510.70px">KZIN0000031</div>
<div class="a g" style="left:156.5px;top:510.70px">6065001000</div>
<div class="a g" style="left:279.70px;top:510.70px;transform:scale(0.999,1.11);transform-origin:1px 2.9px">Sell Off Customer</div>
<div class="a g" style="left:468.70px;top:510.70px;transform:scale(0.956,1.11);transform-origin:1px 2.9px">Sales</div>
<div class="a g" style="left:560.3px;top:510.70px">N</div>
<div class="a g" style="left:670.90px;top:510.70px;transform:scale(1.000,1.11);transform-origin:1px 2.9px">New</div>
<div class="a g" style="right:1013.5px;top:510.70px;transform:scale(1.055,1.11);transform-origin:100% 2.9px">5,313.00</div>
<div class="a g" style="left:916.90px;top:510.70px;transform:scale(0.946,1.11);transform-origin:0px 2.9px">ZAR</div>
<div class="a g" style="left:1000.3px;top:510.70px">A</div>
<div class="a g" style="right:782.2px;top:510.70px;transform:scale(1.0,1.11);transform-origin:100% 2.9px">15.00</div>
<div class="a g" style="left:1147.20px;top:510.70px;transform:scale(1.034,1.11);transform-origin:1px 2.9px">31 Jul 2024</div>
<div class="a g" style="left:1263.70px;top:510.70px;transform:scale(0.989,1.11);transform-origin:1px 2.9px">PSLite068001</div>
<div class="a g" style="left:1513.50px;top:510.70px;transform:scale(1.015,1.11);transform-origin:1px 2.9px">Faith Myers</div>
<div class="a g" style="left:34.0px;top:536.95px">KZIN0000032</div>
<div class="a g" style="left:156.5px;top:536.95px">6065001000</div>
<div class="a g" style="left:279.70px;top:536.95px;transform:scale(0.999,1.11);transform-origin:1px 2.9px">Sell Off Customer</div>
<div class="a g" style="left:468.70px;top:536.95px;transform:scale(0.956,1.11);transform-origin:1px 2.9px">Sales</div>
<div class="a g" style="left:560.3px;top:536.95px">N</div>
<div class="a g" style="left:670.90px;top:536.95px;transform:scale(1.000,1.11);transform-origin:1px 2.9px">New</div>
<div class="a g" style="right:1013.5px;top:536.95px;transform:scale(1.055,1.11);transform-origin:100% 2.9px">4,830.00</div>
<div class="a g" style="left:916.90px;top:536.95px;transform:scale(0.946,1.11);transform-origin:0px 2.9px">ZAR</div>
<div class="a g" style="left:1000.3px;top:536.95px">A</div>
<div class="a g" style="right:782.2px;top:536.95px;transform:scale(1.0,1.11);transform-origin:100% 2.9px">15.00</div>
<div class="a g" style="left:1147.20px;top:536.95px;transform:scale(1.034,1.11);transform-origin:1px 2.9px">31 Jul 2024</div>
<div class="a g" style="left:1263.70px;top:536.95px;transform:scale(1.041,1.11);transform-origin:1px 2.9px">Invoice068001</div>
<div class="a g" style="left:1513.50px;top:536.95px;transform:scale(0.986,1.11);transform-origin:1px 2.9px">Briar Portillo</div>
<div class="a g" style="left:34.0px;top:563.20px">KZIN0000033</div>
<div class="a g" style="left:156.5px;top:563.20px">6075468708</div>
<div class="a g" style="left:279.70px;top:563.20px;transform:scale(0.955,1.11);transform-origin:1px 2.9px">MHRA Burhill CC</div>
<div class="a g" style="left:468.70px;top:563.20px;transform:scale(0.956,1.11);transform-origin:1px 2.9px">Sales</div>
<div class="a g" style="left:560.3px;top:563.20px">N</div>
<div class="a g" style="left:670.90px;top:563.20px;transform:scale(1.000,1.11);transform-origin:1px 2.9px">New</div>
<div class="a g" style="right:1013.5px;top:563.20px;transform:scale(1.055,1.11);transform-origin:100% 2.9px">4,830.00</div>
<div class="a g" style="left:916.90px;top:563.20px;transform:scale(0.946,1.11);transform-origin:0px 2.9px">ZAR</div>
<div class="a g" style="left:1000.3px;top:563.20px">A</div>
<div class="a g" style="right:782.2px;top:563.20px;transform:scale(1.0,1.11);transform-origin:100% 2.9px">15.00</div>
<div class="a g" style="left:1147.20px;top:563.20px;transform:scale(1.034,1.11);transform-origin:1px 2.9px">31 Jul 2024</div>
<div class="a g" style="left:1263.70px;top:563.20px;transform:scale(0.997,1.11);transform-origin:1px 2.9px">MHRA Lite 068001</div>
<div class="a g" style="left:1513.50px;top:563.20px;transform:scale(0.976,1.11);transform-origin:1px 2.9px">Damari Holland</div>
<div class="a g" style="left:34.0px;top:589.45px">KZIN0000035</div>
<div class="a g" style="left:156.5px;top:589.45px">6065001000</div>
<div class="a g" style="left:279.70px;top:589.45px;transform:scale(0.999,1.11);transform-origin:1px 2.9px">Sell Off Customer</div>
<div class="a g" style="left:468.70px;top:589.45px;transform:scale(0.956,1.11);transform-origin:1px 2.9px">Sales</div>
<div class="a g" style="left:560.3px;top:589.45px">N</div>
<div class="a g" style="left:670.90px;top:589.45px;transform:scale(1.000,1.11);transform-origin:1px 2.9px">New</div>
<div class="a g" style="right:1013.5px;top:589.45px;transform:scale(1.055,1.11);transform-origin:100% 2.9px">4,830.00</div>
<div class="a g" style="left:916.90px;top:589.45px;transform:scale(0.946,1.11);transform-origin:0px 2.9px">ZAR</div>
<div class="a g" style="left:1000.3px;top:589.45px">A</div>
<div class="a g" style="right:782.2px;top:589.45px;transform:scale(1.0,1.11);transform-origin:100% 2.9px">15.00</div>
<div class="a g" style="left:1148.20px;top:589.45px;transform:scale(1.018,1.11);transform-origin:0px 2.9px">03 Jun 2024</div>
<div class="a g" style="left:1263.70px;top:589.45px;transform:scale(0.986,1.11);transform-origin:1px 2.9px">Customer PSLite068</div>
<div class="a g" style="left:1513.50px;top:589.45px;transform:scale(1.012,1.11);transform-origin:1px 2.9px">Brigitte B</div>
<div class="a g" style="left:34.0px;top:615.70px">KZIN0000036</div>
<div class="a g" style="left:156.5px;top:615.70px">6065001000</div>
<div class="a g" style="left:279.70px;top:615.70px;transform:scale(0.999,1.11);transform-origin:1px 2.9px">Sell Off Customer</div>
<div class="a g" style="left:468.70px;top:615.70px;transform:scale(0.956,1.11);transform-origin:1px 2.9px">Sales</div>
<div class="a g" style="left:560.3px;top:615.70px">N</div>
<div class="a g" style="left:670.90px;top:615.70px;transform:scale(1.000,1.11);transform-origin:1px 2.9px">New</div>
<div class="a g" style="right:1013.5px;top:615.70px;transform:scale(1.055,1.11);transform-origin:100% 2.9px">4,830.00</div>
<div class="a g" style="left:916.90px;top:615.70px;transform:scale(0.946,1.11);transform-origin:0px 2.9px">ZAR</div>
<div class="a g" style="left:1000.3px;top:615.70px">A</div>
<div class="a g" style="right:782.2px;top:615.70px;transform:scale(1.0,1.11);transform-origin:100% 2.9px">15.00</div>
<div class="a g" style="left:1148.20px;top:615.70px;transform:scale(1.010,1.11);transform-origin:0px 2.9px">03 May 2024</div>
<div class="a g" style="left:1263.70px;top:615.70px;transform:scale(0.942,1.11);transform-origin:1px 2.9px">PSLite</div>
<div class="a g" style="left:1513.50px;top:615.70px;transform:scale(0.987,1.11);transform-origin:1px 2.9px">Drew Nelson</div>
<div class="a g" style="left:34.0px;top:641.95px">KZIN0000037</div>
<div class="a g" style="left:156.5px;top:641.95px">6065001001</div>
<div class="a g" style="left:279.70px;top:641.95px;transform:scale(1.002,1.11);transform-origin:1px 2.9px">Cash Sale Account</div>
<div class="a g" style="left:468.70px;top:641.95px;transform:scale(0.956,1.11);transform-origin:1px 2.9px">Sales</div>
<div class="a g" style="left:560.3px;top:641.95px">N</div>
<div class="a g" style="left:670.90px;top:641.95px;transform:scale(1.000,1.11);transform-origin:1px 2.9px">New</div>
<div class="a g" style="right:1013.5px;top:641.95px;transform:scale(1.055,1.11);transform-origin:100% 2.9px">5,313.00</div>
<div class="a g" style="left:916.90px;top:641.95px;transform:scale(0.946,1.11);transform-origin:0px 2.9px">ZAR</div>
<div class="a g" style="left:1000.3px;top:641.95px">A</div>
<div class="a g" style="right:782.2px;top:641.95px;transform:scale(1.0,1.11);transform-origin:100% 2.9px">15.00</div>
<div class="a g" style="left:1147.20px;top:641.95px;transform:scale(1.034,1.11);transform-origin:1px 2.9px">31 Jul 2024</div>
<div class="a g" style="left:1263.70px;top:641.95px;transform:scale(0.924,1.11);transform-origin:1px 2.9px">SP2020 PSL</div>
<div class="a g" style="left:1513.50px;top:641.95px;transform:scale(0.987,1.11);transform-origin:1px 2.9px">Eden Rowan</div>
<div class="a g" style="left:34.0px;top:668.20px">KZIN0000038</div>
<div class="a g" style="left:156.5px;top:668.20px">6065001000</div>
<div class="a g" style="left:279.70px;top:668.20px;transform:scale(0.999,1.11);transform-origin:1px 2.9px">Sell Off Customer</div>
<div class="a g" style="left:468.70px;top:668.20px;transform:scale(0.956,1.11);transform-origin:1px 2.9px">Sales</div>
<div class="a g" style="left:560.3px;top:668.20px">N</div>
<div class="a g" style="left:670.90px;top:668.20px;transform:scale(1.000,1.11);transform-origin:1px 2.9px">New</div>
<div class="a g" style="right:1013.5px;top:668.20px;transform:scale(1.055,1.11);transform-origin:100% 2.9px">4,830.00</div>
<div class="a g" style="left:916.90px;top:668.20px;transform:scale(0.946,1.11);transform-origin:0px 2.9px">ZAR</div>
<div class="a g" style="left:1000.3px;top:668.20px">A</div>
<div class="a g" style="right:782.2px;top:668.20px;transform:scale(1.0,1.11);transform-origin:100% 2.9px">15.00</div>
<div class="a g" style="left:1147.20px;top:668.20px;transform:scale(1.034,1.11);transform-origin:1px 2.9px">31 Jul 2024</div>
<div class="a g" style="left:1263.70px;top:668.20px;transform:scale(0.959,1.11);transform-origin:1px 2.9px">PSLITE068</div>
<div class="a g" style="left:1513.50px;top:668.20px;transform:scale(0.987,1.11);transform-origin:1px 2.9px">Eden Rowan</div>
<div class="a g" style="left:34.0px;top:694.45px">KZIN0000039</div>
<div class="a g" style="left:156.5px;top:694.45px">6065001000</div>
<div class="a g" style="left:279.70px;top:694.45px;transform:scale(0.999,1.11);transform-origin:1px 2.9px">Sell Off Customer</div>
<div class="a g" style="left:468.70px;top:694.45px;transform:scale(0.956,1.11);transform-origin:1px 2.9px">Sales</div>
<div class="a g" style="left:560.3px;top:694.45px">N</div>
<div class="a g" style="left:670.90px;top:694.45px;transform:scale(1.000,1.11);transform-origin:1px 2.9px">New</div>
<div class="a g" style="right:1013.5px;top:694.45px;transform:scale(1.055,1.11);transform-origin:100% 2.9px">4,830.00</div>
<div class="a g" style="left:916.90px;top:694.45px;transform:scale(0.946,1.11);transform-origin:0px 2.9px">ZAR</div>
<div class="a g" style="left:1000.3px;top:694.45px">A</div>
<div class="a g" style="right:782.2px;top:694.45px;transform:scale(1.0,1.11);transform-origin:100% 2.9px">15.00</div>
<div class="a g" style="left:1147.20px;top:694.45px;transform:scale(1.061,1.11);transform-origin:1px 2.9px">30 Apr 2024</div>
<div class="a g" style="left:1263.70px;top:694.45px;transform:scale(0.977,1.11);transform-origin:1px 2.9px">SellOffCustomerPSL</div>
<div class="a g" style="left:1513.50px;top:694.45px;transform:scale(0.987,1.11);transform-origin:1px 2.9px">Eden Rowan</div>
<div class="a g" style="left:34.0px;top:720.70px">KZIN0000040</div>
<div class="a g" style="left:156.5px;top:720.70px">6065001001</div>
<div class="a g" style="left:279.70px;top:720.70px;transform:scale(1.002,1.11);transform-origin:1px 2.9px">Cash Sale Account</div>
<div class="a g" style="left:468.70px;top:720.70px;transform:scale(0.956,1.11);transform-origin:1px 2.9px">Sales</div>
<div class="a g" style="left:560.3px;top:720.70px">N</div>
<div class="a g" style="left:670.90px;top:720.70px;transform:scale(1.000,1.11);transform-origin:1px 2.9px">New</div>
<div class="a g" style="right:1013.5px;top:720.70px;transform:scale(1.055,1.11);transform-origin:100% 2.9px">4,830.00</div>
<div class="a g" style="left:916.90px;top:720.70px;transform:scale(0.946,1.11);transform-origin:0px 2.9px">ZAR</div>
<div class="a g" style="left:1000.3px;top:720.70px">A</div>
<div class="a g" style="right:782.2px;top:720.70px;transform:scale(1.0,1.11);transform-origin:100% 2.9px">15.00</div>
<div class="a g" style="left:1148.20px;top:720.70px;transform:scale(1.046,1.11);transform-origin:0px 2.9px">05 Apr 2024</div>
<div class="a g" style="left:1263.70px;top:720.70px;transform:scale(0.999,1.11);transform-origin:1px 2.9px">CashSale 068001</div>
<div class="a g" style="left:1513.50px;top:720.70px;transform:scale(0.987,1.11);transform-origin:1px 2.9px">Eden Rowan</div>
<div class="a g" style="left:34.0px;top:746.95px">KZIN0000041</div>
<div class="a g" style="left:156.5px;top:746.95px">6065001001</div>
<div class="a g" style="left:279.70px;top:746.95px;transform:scale(1.002,1.11);transform-origin:1px 2.9px">Cash Sale Account</div>
<div class="a g" style="left:468.70px;top:746.95px;transform:scale(0.956,1.11);transform-origin:1px 2.9px">Sales</div>
<div class="a g" style="left:560.3px;top:746.95px">N</div>
<div class="a g" style="left:670.90px;top:746.95px;transform:scale(1.000,1.11);transform-origin:1px 2.9px">New</div>
<div class="a g" style="right:1013.5px;top:746.95px;transform:scale(1.055,1.11);transform-origin:100% 2.9px">4,830.00</div>
<div class="a g" style="left:916.90px;top:746.95px;transform:scale(0.946,1.11);transform-origin:0px 2.9px">ZAR</div>
<div class="a g" style="left:1000.3px;top:746.95px">A</div>
<div class="a g" style="right:782.2px;top:746.95px;transform:scale(1.0,1.11);transform-origin:100% 2.9px">15.00</div>
<div class="a g" style="left:1147.20px;top:746.95px;transform:scale(1.061,1.11);transform-origin:1px 2.9px">19 Apr 2024</div>
<div class="a g" style="left:1263.70px;top:746.95px;transform:scale(0.988,1.11);transform-origin:1px 2.9px">CashSale068000</div>
<div class="a g" style="left:1513.50px;top:746.95px;transform:scale(0.987,1.11);transform-origin:1px 2.9px">Eden Rowan</div>
<div class="a g" style="left:34.0px;top:773.20px">KZIN0000042</div>
<div class="a g" style="left:156.5px;top:773.20px">6065001000</div>
<div class="a g" style="left:279.70px;top:773.20px;transform:scale(0.999,1.11);transform-origin:1px 2.9px">Sell Off Customer</div>
<div class="a g" style="left:468.70px;top:773.20px;transform:scale(0.956,1.11);transform-origin:1px 2.9px">Sales</div>
<div class="a g" style="left:560.3px;top:773.20px">N</div>
<div class="a g" style="left:670.90px;top:773.20px;transform:scale(1.000,1.11);transform-origin:1px 2.9px">New</div>
<div class="a g" style="right:1013.5px;top:773.20px;transform:scale(1.055,1.11);transform-origin:100% 2.9px">4,830.00</div>
<div class="a g" style="left:916.90px;top:773.20px;transform:scale(0.946,1.11);transform-origin:0px 2.9px">ZAR</div>
<div class="a g" style="left:1000.3px;top:773.20px">A</div>
<div class="a g" style="right:782.2px;top:773.20px;transform:scale(1.0,1.11);transform-origin:100% 2.9px">15.00</div>
<div class="a g" style="left:1147.20px;top:773.20px;transform:scale(1.032,1.11);transform-origin:1px 2.9px">14 Jun 2024</div>
<div class="a g" style="left:1263.70px;top:773.20px;transform:scale(0.967,1.11);transform-origin:1px 2.9px">CustomerPSL</div>
<div class="a g" style="left:1513.50px;top:773.20px;transform:scale(0.987,1.11);transform-origin:1px 2.9px">Eden Rowan</div>
<div class="a g" style="left:34.0px;top:799.45px">KZIN0000043</div>
<div class="a g" style="left:156.5px;top:799.45px">6065001001</div>
<div class="a g" style="left:279.70px;top:799.45px;transform:scale(1.002,1.11);transform-origin:1px 2.9px">Cash Sale Account</div>
<div class="a g" style="left:468.70px;top:799.45px;transform:scale(0.956,1.11);transform-origin:1px 2.9px">Sales</div>
<div class="a g" style="left:560.3px;top:799.45px">N</div>
<div class="a g" style="left:670.90px;top:799.45px;transform:scale(1.000,1.11);transform-origin:1px 2.9px">New</div>
<div class="a g" style="right:1013.5px;top:799.45px;transform:scale(1.055,1.11);transform-origin:100% 2.9px">4,830.00</div>
<div class="a g" style="left:916.90px;top:799.45px;transform:scale(0.946,1.11);transform-origin:0px 2.9px">ZAR</div>
<div class="a g" style="left:1000.3px;top:799.45px">A</div>
<div class="a g" style="right:782.2px;top:799.45px;transform:scale(1.0,1.11);transform-origin:100% 2.9px">15.00</div>
<div class="a g" style="left:1147.20px;top:799.45px;transform:scale(1.032,1.11);transform-origin:1px 2.9px">18 Jun 2024</div>
<div class="a g" style="left:1263.70px;top:799.45px;transform:scale(0.973,1.11);transform-origin:1px 2.9px">CashSale</div>
<div class="a g" style="left:1513.50px;top:799.45px;transform:scale(0.987,1.11);transform-origin:1px 2.9px">Eden Rowan</div>
<div class="a g" style="left:34.0px;top:825.70px">KZIN0000044</div>
<div class="a g" style="left:156.5px;top:825.70px">6055478013</div>
<div class="a g" style="left:280.70px;top:825.70px;transform:scale(0.994,1.11);transform-origin:0px 2.9px">Warn Blade Systems</div>
<div class="a g" style="left:468.70px;top:825.70px;transform:scale(0.956,1.11);transform-origin:1px 2.9px">Sales</div>
<div class="a g" style="left:560.3px;top:825.70px">N</div>
<div class="a g" style="left:670.90px;top:825.70px;transform:scale(1.000,1.11);transform-origin:1px 2.9px">New</div>
<div class="a g" style="right:1013.5px;top:825.70px;transform:scale(1.055,1.11);transform-origin:100% 2.9px">4,830.00</div>
<div class="a g" style="left:916.90px;top:825.70px;transform:scale(0.946,1.11);transform-origin:0px 2.9px">ZAR</div>
<div class="a g" style="left:1000.3px;top:825.70px">A</div>
<div class="a g" style="right:782.2px;top:825.70px;transform:scale(1.0,1.11);transform-origin:100% 2.9px">15.00</div>
<div class="a g" style="left:1147.20px;top:825.70px;transform:scale(1.032,1.11);transform-origin:1px 2.9px">25 Jun 2024</div>
<div class="a g" style="left:1264.70px;top:825.70px;transform:scale(0.950,1.11);transform-origin:0px 2.9px">WarnBladePSL</div>
<div class="a g" style="left:1513.50px;top:825.70px;transform:scale(0.987,1.11);transform-origin:1px 2.9px">Eden Rowan</div>
</body></html>
